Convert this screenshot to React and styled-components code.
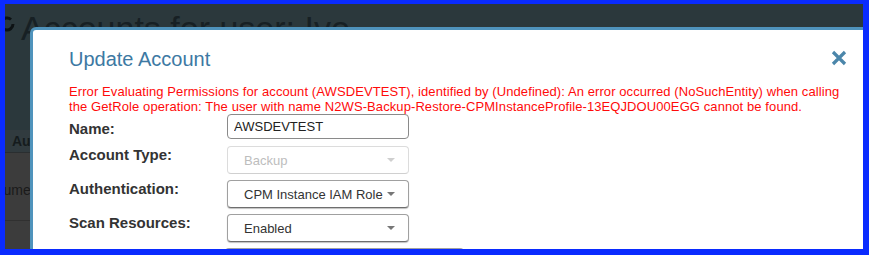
import React from 'react';
import styled, { createGlobalStyle } from 'styled-components';

const GlobalStyle = createGlobalStyle`
  html, body {
    margin: 0;
    padding: 0;
    background: #0a2bff;
  }
  body {
    font-family: "Liberation Sans", Arial, sans-serif;
  }
  * {
    box-sizing: border-box;
  }
`;

const Frame = styled.div`
  width: 869px;
  height: 255px;
  border-style: solid;
  border-color: #0a2bff;
  border-width: 4px 6px 6px 5px;
  background: #0a2bff;
`;

const Screen = styled.div`
  position: relative;
  width: 100%;
  height: 100%;
  overflow: hidden;
  background: #3c3c3c;
`;

const PageHeader = styled.div`
  height: 126px;
  background: #2b383c;
  display: flex;
  align-items: flex-start;
  gap: 6px;
  padding-top: 4px;
  margin-left: -6px;
`;

const PageTitle = styled.h1`
  margin: 0;
  font-size: 34px;
  line-height: 40px;
  font-weight: 400;
  color: #172024;
  white-space: nowrap;
`;

const BackIcon = styled.svg`
  margin-top: 8px;
  flex: none;
`;

const TableHead = styled.div`
  height: 23px;
  background: #313b3f;
  border-bottom: 1px solid #2a2e30;
  display: flex;
  align-items: center;
  padding-left: 7px;
  font-size: 14px;
  font-weight: 700;
  color: #151b1d;
`;

const TableRow = styled.div`
  height: ${(p) => p.$height}px;
  border-bottom: 1px solid #303030;
  display: flex;
  align-items: center;
  font-size: 14px;
  color: #1a1a1a;
  padding-top: ${(p) => p.$shift || 0}px;
`;

const Cell = styled.span`
  margin-left: -21px;
  white-space: nowrap;
`;

const Modal = styled.div`
  position: absolute;
  left: 25px;
  top: 23px;
  width: 850px;
  height: 300px;
  background: #fff;
  border: 3px solid #4f93bc;
  border-radius: 6px;
  padding: 17px 30px 0 36px;
`;

const ModalHeader = styled.div`
  display: flex;
  justify-content: space-between;
  align-items: center;
`;

const ModalTitle = styled.h2`
  margin: 0;
  font-size: 20px;
  line-height: 24px;
  font-weight: 400;
  color: #3d79a3;
`;

const CloseButton = styled.button`
  border: 0;
  background: none;
  padding: 0;
  width: 16px;
  height: 16px;
  margin-top: -2px;
  display: flex;
  cursor: pointer;
`;

const ErrorText = styled.p`
  margin: 13px 0 0;
  font-size: 13px;
  line-height: 15px;
  letter-spacing: 0.09px;
  color: #ff0a0a;
`;

const Form = styled.div`
  display: flex;
  flex-direction: column;
  gap: 6px;
`;

const Row = styled.div`
  display: grid;
  grid-template-columns: 158px auto;
  align-items: start;
  min-height: ${(p) => p.$min || 28}px;
`;

const Label = styled.label`
  font-size: 15px;
  line-height: 17px;
  font-weight: 700;
  color: #333;
  padding-top: ${(p) => p.$offset || 0}px;
`;

const TextInput = styled.input`
  width: 182px;
  height: 25px;
  border: 1px solid #8a8a8a;
  border-radius: 4px;
  padding: 0 6px;
  font-family: "Liberation Sans", Arial, sans-serif;
  font-size: 13px;
  color: #222;
  outline: none;
`;

const Select = styled.div`
  position: relative;
  width: ${(p) => p.$width || 182}px;
  height: 28px;
  margin-left: ${(p) => p.$shift || 0}px;
  border: 1px solid ${(p) => (p.$disabled ? '#dcdcdc' : '#a0a0a0')};
  border-bottom-color: ${(p) => (p.$disabled ? '#d0d0d0' : '#6e6e6e')};
  border-radius: 4px;
  box-shadow: ${(p) => (p.$disabled ? 'none' : '0 1px 1px rgba(0,0,0,0.25)')};
  background: #fff;
  display: flex;
  align-items: center;
  padding-left: 16px;
  font-size: 13px;
  color: ${(p) => (p.$disabled ? '#bdbdbd' : '#333')};
  white-space: nowrap;
`;

const Caret = styled.span`
  position: absolute;
  right: 13px;
  top: 50%;
  margin-top: -2px;
  width: 0;
  height: 0;
  border-left: 4px solid transparent;
  border-right: 4px solid transparent;
  border-top: 4px solid ${(p) => (p.$disabled ? '#cfcfcf' : '#777')};
`;

export default function App() {
  return (
    <>
      <GlobalStyle />
      <Frame>
        <Screen>
          <PageHeader>
            <BackIcon width="16" height="16" viewBox="0 0 16 16">
              <path d="M12 3.5 A6 6 0 1 0 14 8" fill="none" stroke="#0d1214" strokeWidth="3" />
            </BackIcon>
            <PageTitle>Accounts for user: Ivo</PageTitle>
          </PageHeader>
          <TableHead>Au</TableHead>
          <TableRow $height={68} $shift={6}>
            <Cell>Volume:</Cell>
          </TableRow>
          <TableRow $height={40} />

          <Modal>
            <ModalHeader>
              <ModalTitle>Update Account</ModalTitle>
              <CloseButton aria-label="Close">
                <svg width="16" height="16" viewBox="0 0 16 16">
                  <path d="M2 2 L14 14 M14 2 L2 14" stroke="#4b86aa" strokeWidth="3.2" strokeLinecap="butt" />
                </svg>
              </CloseButton>
            </ModalHeader>
            <ErrorText>
              Error Evaluating Permissions for account (AWSDEVTEST), identified by (Undefined): An error occurred (NoSuchEntity) when calling the GetRole operation: The user with name N2WS-Backup-Restore-CPMInstanceProfile-13EQJDOU00EGG cannot be found.
            </ErrorText>
            <Form>
              <Row $min={26}>
                <Label $offset={6}>Name:</Label>
                <TextInput defaultValue="AWSDEVTEST" />
              </Row>
              <Row>
                <Label>Account Type:</Label>
                <Select $disabled>
                  Backup
                  <Caret $disabled />
                </Select>
              </Row>
              <Row>
                <Label>Authentication:</Label>
                <Select>
                  CPM Instance IAM Role
                  <Caret />
                </Select>
              </Row>
              <Row>
                <Label>Scan Resources:</Label>
                <Select>
                  Enabled
                  <Caret />
                </Select>
              </Row>
              <Row>
                <Label />
                <Select $width={239} $shift={-2} />
              </Row>
            </Form>
          </Modal>
        </Screen>
      </Frame>
    </>
  );
}
